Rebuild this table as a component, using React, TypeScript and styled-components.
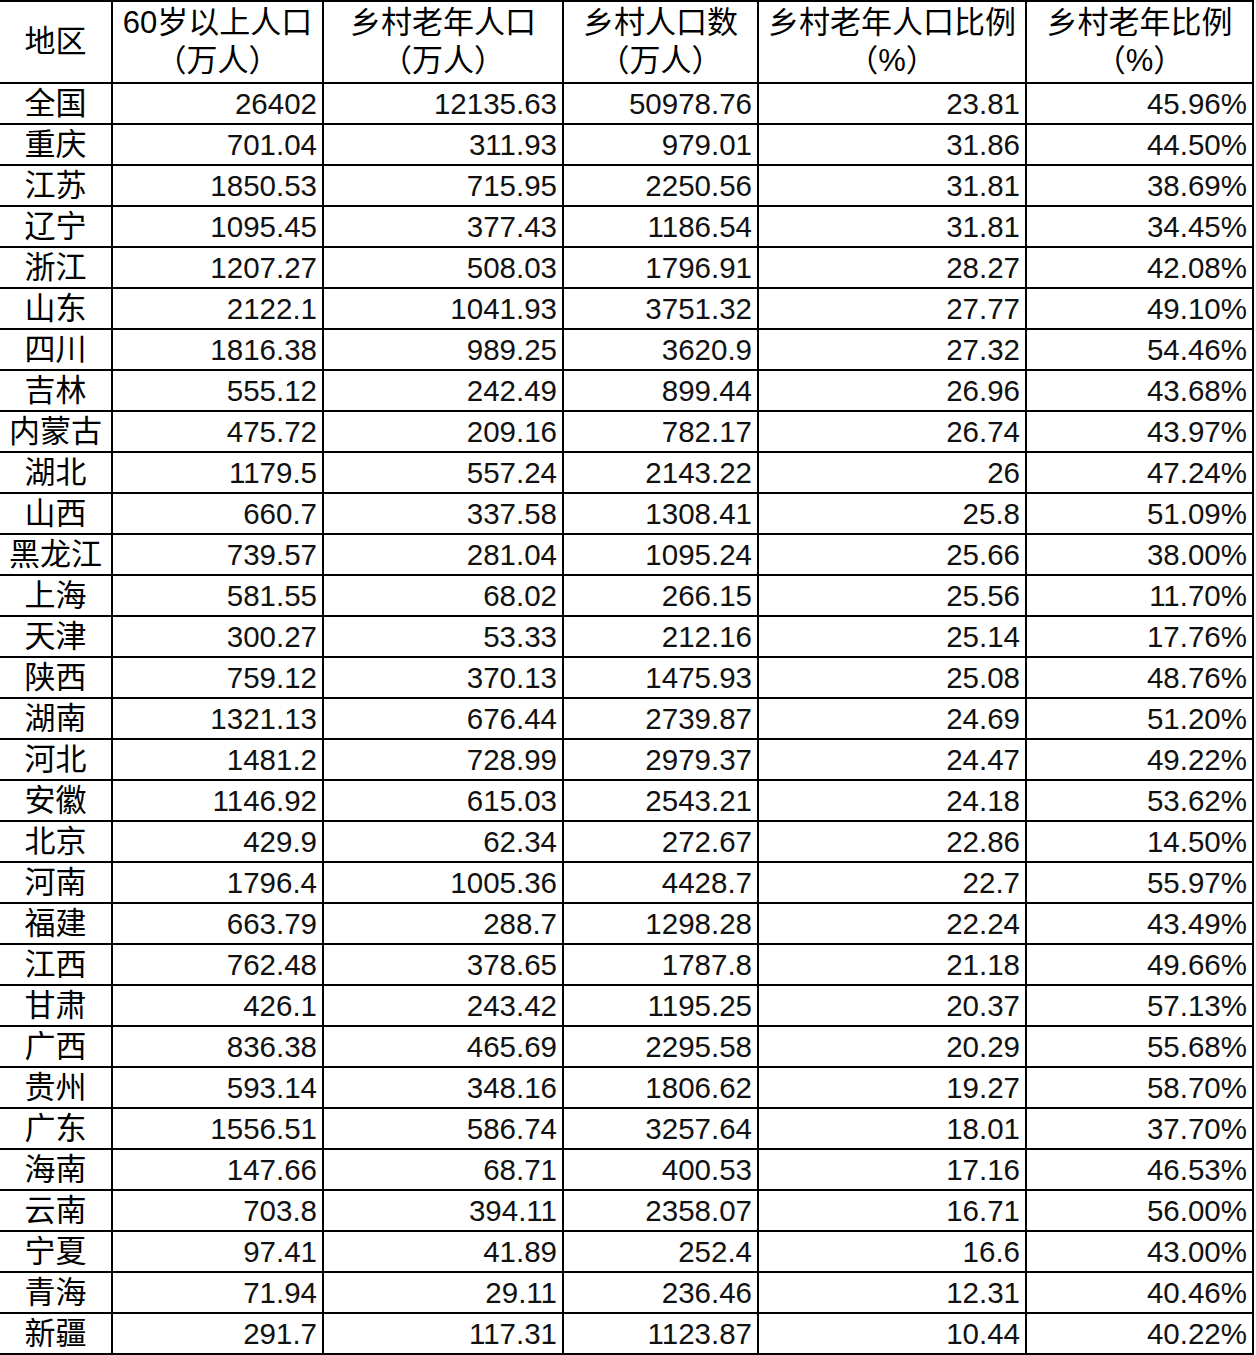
import React from "react";
import styled, { createGlobalStyle } from "styled-components";

const GlobalStyle = createGlobalStyle`
  html, body {
    margin: 0;
    padding: 0;
    background: #ffffff;
  }
  body {
    font-family: "Liberation Sans", "Noto Sans CJK SC", sans-serif;
    color: #000000;
  }
`;

const headers: { title: string; unit?: string }[] = [
  { title: "地区" },
  { title: "60岁以上人口", unit: "（万人）" },
  { title: "乡村老年人口", unit: "（万人）" },
  { title: "乡村人口数", unit: "（万人）" },
  { title: "乡村老年人口比例", unit: "（%）" },
  { title: "乡村老年比例", unit: "（%）" },
];

const widths = [112, 211, 240, 195, 268, 227];

const rows: string[][] = [
  ["全国", "26402", "12135.63", "50978.76", "23.81", "45.96%"],
  ["重庆", "701.04", "311.93", "979.01", "31.86", "44.50%"],
  ["江苏", "1850.53", "715.95", "2250.56", "31.81", "38.69%"],
  ["辽宁", "1095.45", "377.43", "1186.54", "31.81", "34.45%"],
  ["浙江", "1207.27", "508.03", "1796.91", "28.27", "42.08%"],
  ["山东", "2122.1", "1041.93", "3751.32", "27.77", "49.10%"],
  ["四川", "1816.38", "989.25", "3620.9", "27.32", "54.46%"],
  ["吉林", "555.12", "242.49", "899.44", "26.96", "43.68%"],
  ["内蒙古", "475.72", "209.16", "782.17", "26.74", "43.97%"],
  ["湖北", "1179.5", "557.24", "2143.22", "26", "47.24%"],
  ["山西", "660.7", "337.58", "1308.41", "25.8", "51.09%"],
  ["黑龙江", "739.57", "281.04", "1095.24", "25.66", "38.00%"],
  ["上海", "581.55", "68.02", "266.15", "25.56", "11.70%"],
  ["天津", "300.27", "53.33", "212.16", "25.14", "17.76%"],
  ["陕西", "759.12", "370.13", "1475.93", "25.08", "48.76%"],
  ["湖南", "1321.13", "676.44", "2739.87", "24.69", "51.20%"],
  ["河北", "1481.2", "728.99", "2979.37", "24.47", "49.22%"],
  ["安徽", "1146.92", "615.03", "2543.21", "24.18", "53.62%"],
  ["北京", "429.9", "62.34", "272.67", "22.86", "14.50%"],
  ["河南", "1796.4", "1005.36", "4428.7", "22.7", "55.97%"],
  ["福建", "663.79", "288.7", "1298.28", "22.24", "43.49%"],
  ["江西", "762.48", "378.65", "1787.8", "21.18", "49.66%"],
  ["甘肃", "426.1", "243.42", "1195.25", "20.37", "57.13%"],
  ["广西", "836.38", "465.69", "2295.58", "20.29", "55.68%"],
  ["贵州", "593.14", "348.16", "1806.62", "19.27", "58.70%"],
  ["广东", "1556.51", "586.74", "3257.64", "18.01", "37.70%"],
  ["海南", "147.66", "68.71", "400.53", "17.16", "46.53%"],
  ["云南", "703.8", "394.11", "2358.07", "16.71", "56.00%"],
  ["宁夏", "97.41", "41.89", "252.4", "16.6", "43.00%"],
  ["青海", "71.94", "29.11", "236.46", "12.31", "40.46%"],
  ["新疆", "291.7", "117.31", "1123.87", "10.44", "40.22%"],
];

const Sheet = styled.table`
  width: 1253px;
  table-layout: fixed;
  border-collapse: collapse;
  border-top: 2px solid #000;
`;

const HeadCell = styled.th<{ $first?: boolean }>`
  height: 80px;
  padding: 0;
  font-weight: normal;
  font-size: 31px;
  line-height: 38px;
  text-align: center;
  vertical-align: middle;
  white-space: nowrap;
  border-left: ${(p) => (p.$first ? "none" : "2px solid #000")};
  border-right: 2px solid #000;
  border-bottom: 2px solid #000;
`;

const UnitLine = styled.div`
  display: block;
`;

const RegionCell = styled.td`
  height: 39px;
  padding: 0;
  font-size: 31px;
  line-height: 39px;
  text-align: center;
  white-space: nowrap;
  border-right: 2px solid #000;
  border-bottom: 2px solid #000;
`;

const NumCell = styled.td`
  height: 39px;
  padding: 0 5px 0 0;
  font-size: 29.5px;
  line-height: 39px;
  text-align: right;
  white-space: nowrap;
  color: #111;
  border-left: 2px solid #000;
  border-right: 2px solid #000;
  border-bottom: 2px solid #000;
`;

const App: React.FC = () => {
  return (
    <>
      <GlobalStyle />
      <Sheet>
        <colgroup>
          {widths.map((w, idx) => (
            <col key={idx} style={{ width: w }} />
          ))}
        </colgroup>
        <thead>
          <tr>
            {headers.map((h, idx) => (
              <HeadCell key={idx} $first={idx === 0}>
                {h.title}
                {h.unit && <UnitLine>{h.unit}</UnitLine>}
              </HeadCell>
            ))}
          </tr>
        </thead>
        <tbody>
          {rows.map((row) => (
            <tr key={row[0]}>
              <RegionCell>{row[0]}</RegionCell>
              {row.slice(1).map((val, idx) => (
                <NumCell key={idx}>{val}</NumCell>
              ))}
            </tr>
          ))}
        </tbody>
      </Sheet>
    </>
  );
};

export default App;
